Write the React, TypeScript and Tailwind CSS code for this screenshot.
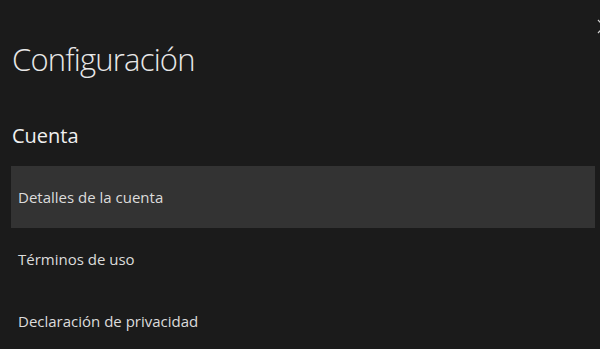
const ITEMS = ['Detalles de la cuenta', 'Términos de uso', 'Declaración de privacidad'];

export default function App() {
  return (
    <div className="relative h-[349px] w-[600px] overflow-hidden bg-[#1b1b1b] text-white font-['Open_Sans',sans-serif]">
      {/* close glyph, cut off at the window edge */}
      <svg className="absolute left-[597px] top-[19px]" width="14" height="15" viewBox="0 0 14 15">
        <path d="M1 1 L13 14 M13 1 L1 14" stroke="#cfcfcf" strokeWidth="1.2" fill="none" />
      </svg>

      <div className="pl-[11px] pr-[5px] pt-[39px]">
        <h1 className="text-[31px] font-light leading-[40px] tracking-[-0.8px] text-[#e8e8e8] pl-[1px]">Configuración</h1>
        <h2 className="mt-[43px] text-[20px] font-medium leading-[28px] text-[#f0f0f0] pl-[1px]">Cuenta</h2>
        <ul className="mt-[16px]">
          {ITEMS.map((item, idx) => (
            <li
              key={item}
              className={`flex h-[62px] items-center pl-[7px] text-[15px] text-[#dcdcdc] ${idx === 0 ? 'bg-[#333333]' : ''}`}
            >
              {item}
            </li>
          ))}
        </ul>
      </div>
    </div>
  );
}
